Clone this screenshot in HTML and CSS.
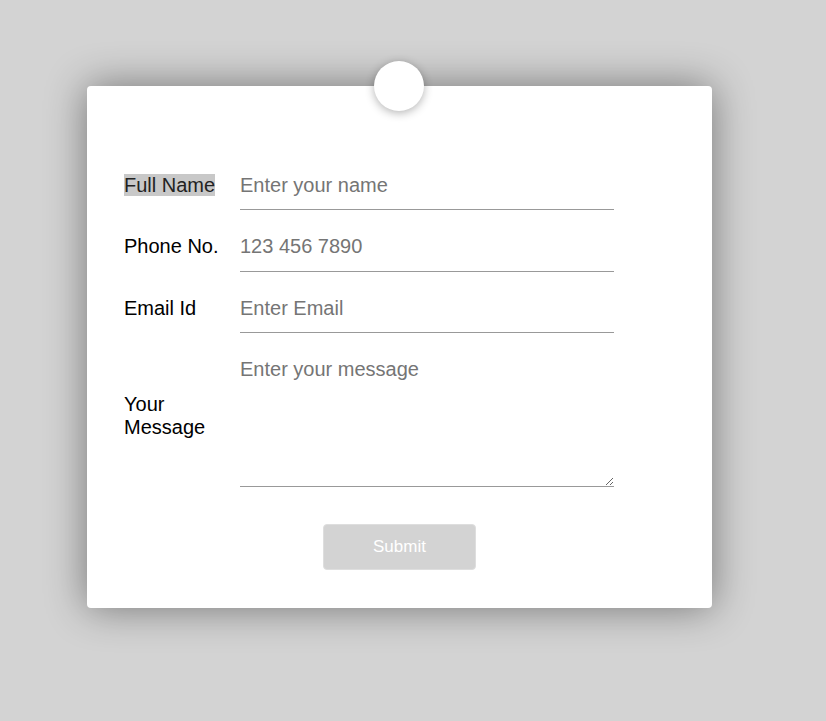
FILE: index.html
```html
<!DOCTYPE html>
<html lang="en">
<head>
<meta charset="utf-8">
<title>Contact</title>
<link rel="stylesheet" href="styles.css">
</head>
<body>
<div class="card">
  <div class="pin"></div>
  <form class="form">
    <div class="row">
      <label class="label"><span class="hl">Full Name</span></label>
      <input class="field" type="text" placeholder="Enter your name">
    </div>
    <div class="row">
      <label class="label">Phone No.</label>
      <input class="field" type="text" placeholder="123 456 7890">
    </div>
    <div class="row">
      <label class="label">Email Id</label>
      <input class="field" type="text" placeholder="Enter Email">
    </div>
    <div class="row">
      <label class="label">Your Message</label>
      <textarea class="field area" placeholder="Enter your message"></textarea>
    </div>
    <div class="actions">
      <button class="submit" type="button">Submit</button>
    </div>
  </form>
</div>
</body>
</html>
```

FILE: styles.css
```css
html, body {
  margin: 0;
  padding: 0;
}
body {
  background: #d3d3d3;
  font-family: "Liberation Sans", Arial, sans-serif;
  height: 721px;
  overflow: hidden;
}
.card {
  position: relative;
  box-sizing: border-box;
  width: 625px;
  height: 522px;
  margin: 86px 0 0 87px;
  background: #fff;
  border-radius: 4px;
  box-shadow: 0 0 40px rgba(0, 0, 0, 0.45);
  padding: 74px 98px 0 37px;
}
.pin {
  position: absolute;
  top: -25px;
  left: 287px;
  width: 50px;
  height: 50px;
  border-radius: 50%;
  background: #fff;
  box-shadow: 0 2px 10px rgba(0, 0, 0, 0.3);
}
.form {
  display: flex;
  flex-direction: column;
  gap: 11.5px;
}
.row {
  display: flex;
  align-items: center;
}
.label {
  width: 116px;
  flex: none;
  font-size: 20px;
  line-height: 23px;
  color: #000;
}
.hl {
  background: #c8c8c8;
  color: #222;
}
.field {
  box-sizing: border-box;
  width: 374px;
  height: 50px;
  border: none;
  border-bottom: 1px solid #999;
  padding: 1px 0 0;
  margin: 0;
  font-family: "Liberation Sans", Arial, sans-serif;
  font-size: 20px;
  color: #000;
  outline: none;
  background: transparent;
}
.field::placeholder {
  color: #757575;
}
.area {
  height: 142px;
  padding: 13px 0 0;
  line-height: 23px;
}
.actions {
  display: flex;
  justify-content: center;
  margin: 26px -98px 0 -37px;
}
.submit {
  width: 153px;
  height: 46px;
  background: #d3d3d3;
  border: 1px solid #dedede;
  border-radius: 4px;
  color: #fff;
  font-family: "Liberation Sans", Arial, sans-serif;
  font-size: 17px;
}
```
